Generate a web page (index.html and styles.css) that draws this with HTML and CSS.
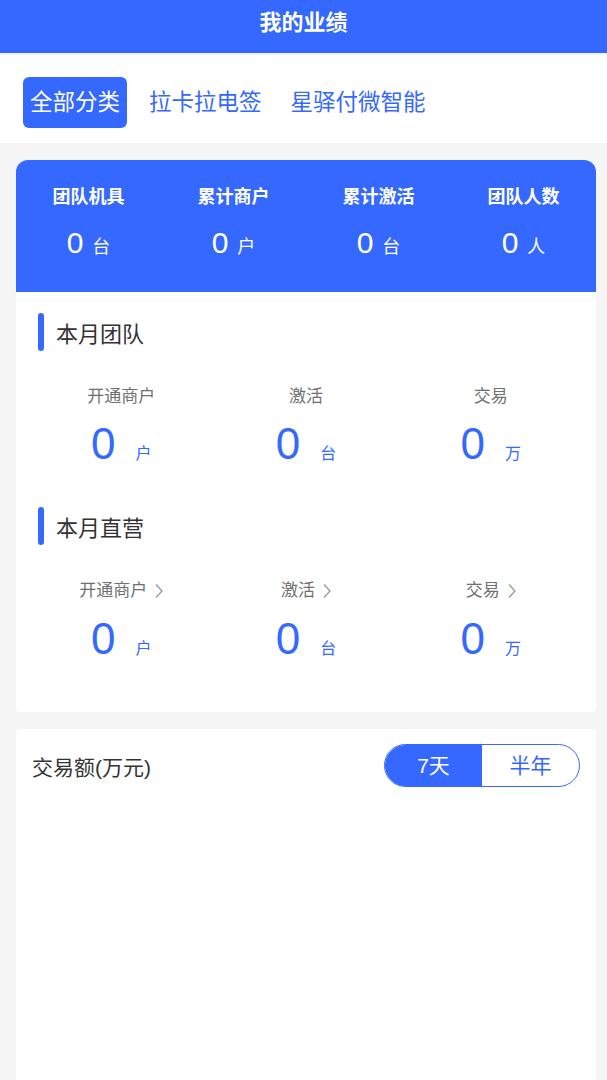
FILE: index.html
```
<!DOCTYPE html>
<html lang="zh-CN">
<head>
    <meta charset="UTF-8">
    <title>我的业绩</title>
    <link rel="stylesheet" href="styles.css">
</head>
<body>
<header class="topbar">我的业绩</header>

<nav class="tabs">
    <span class="tab active">全部分类</span>
    <span class="tab">拉卡拉电签</span>
    <span class="tab">星驿付微智能</span>
</nav>

<main class="page">
    <section class="card summary">
        <div class="summary-head">
            <div class="stat">
                <div class="stat-label">团队机具</div>
                <div class="stat-value">0<span class="unit">台</span></div>
            </div>
            <div class="stat">
                <div class="stat-label">累计商户</div>
                <div class="stat-value">0<span class="unit">户</span></div>
            </div>
            <div class="stat">
                <div class="stat-label">累计激活</div>
                <div class="stat-value">0<span class="unit">台</span></div>
            </div>
            <div class="stat">
                <div class="stat-label">团队人数</div>
                <div class="stat-value">0<span class="unit">人</span></div>
            </div>
        </div>

        <div class="block">
            <h2 class="block-title">本月团队</h2>
            <div class="metrics">
                <div class="metric">
                    <div class="metric-label">开通商户</div>
                    <div class="metric-value">0<span class="unit">户</span></div>
                </div>
                <div class="metric">
                    <div class="metric-label">激活</div>
                    <div class="metric-value">0<span class="unit">台</span></div>
                </div>
                <div class="metric">
                    <div class="metric-label">交易</div>
                    <div class="metric-value">0<span class="unit">万</span></div>
                </div>
            </div>
        </div>

        <div class="block second">
            <h2 class="block-title">本月直营</h2>
            <div class="metrics">
                <div class="metric">
                    <div class="metric-label">开通商户<svg class="chev" viewBox="0 0 8 16"><path d="M1 1.5 L7 8 L1 14.5"/></svg></div>
                    <div class="metric-value">0<span class="unit">户</span></div>
                </div>
                <div class="metric">
                    <div class="metric-label">激活<svg class="chev" viewBox="0 0 8 16"><path d="M1 1.5 L7 8 L1 14.5"/></svg></div>
                    <div class="metric-value">0<span class="unit">台</span></div>
                </div>
                <div class="metric">
                    <div class="metric-label">交易<svg class="chev" viewBox="0 0 8 16"><path d="M1 1.5 L7 8 L1 14.5"/></svg></div>
                    <div class="metric-value">0<span class="unit">万</span></div>
                </div>
            </div>
        </div>
    </section>

    <section class="card chart">
        <div class="chart-head">
            <h2 class="chart-title">交易额(万元)</h2>
            <div class="switch">
                <span class="switch-item on">7天</span>
                <span class="switch-item">半年</span>
            </div>
        </div>
        <div class="chart-body"></div>
    </section>
</main>
</body>
</html>
```

FILE: styles.css
```
html {
    background: #f5f5f5;
}
body {
    margin: 0;
    font-family: "Liberation Sans", "Noto Sans CJK SC", sans-serif;
    color: #333;
    background: #f5f5f5;
}
h2 {
    margin: 0;
    font-weight: normal;
}

.topbar {
    height: 53px;
    background: #3468ff;
    color: white;
    font-size: 22px;
    font-weight: bold;
    display: flex;
    align-items: center;
    justify-content: center;
    padding-bottom: 14px;
    box-sizing: border-box;
}

.tabs {
    margin-top: 2px;
    background: white;
    padding: 22px 23px 15px 23px;
    display: flex;
    gap: 15px;
}
.tab {
    padding: 0 7px;
    line-height: 51px;
    font-size: 22.5px;
    color: #3468ff;
    border-radius: 6px;
}
.tab.active {
    background: #3468ff;
    color: white;
}

.page {
    padding: 17px 11px 0 16px;
}
.card {
    background: white;
}
.summary {
    border-radius: 12px 12px 4px 4px;
    padding-bottom: 38px;
}

.summary-head {
    background: #3468ff;
    border-radius: 12px 12px 0 0;
    height: 132px;
    box-sizing: border-box;
    padding-top: 25px;
    display: grid;
    grid-template-columns: repeat(4, 1fr);
    color: white;
    text-align: center;
}
.stat-label {
    font-size: 18px;
    font-weight: bold;
    line-height: 24px;
}
.stat-value {
    margin-top: 14px;
    font-size: 30px;
    line-height: 40px;
}
.stat-value .unit {
    font-size: 18px;
    margin-left: 9px;
}

.block {
    padding: 21px 13px 0 13px;
}
.block.second {
    padding-top: 28px;
}
.block-title {
    display: flex;
    align-items: center;
    height: 38px;
    font-size: 22px;
    color: #333;
    margin-left: 9px;
}
.block-title::before {
    content: "";
    width: 6px;
    height: 38px;
    border-radius: 3px;
    background: #3468ff;
    margin-right: 12px;
}

.metrics {
    display: grid;
    grid-template-columns: repeat(3, 1fr);
    text-align: center;
    margin-top: 34px;
}
.metric-label {
    font-size: 17px;
    line-height: 24px;
    color: #707070;
    display: flex;
    align-items: center;
    justify-content: center;
}
.chev {
    width: 8px;
    height: 16px;
    margin-left: 8px;
    fill: none;
    stroke: #999;
    stroke-width: 1.3;
}
.metric-value {
    margin-top: 10px;
    font-size: 44px;
    line-height: 50px;
    color: #3468ff;
}
.second .metric-value {
    margin-top: 11px;
}
.metric-value .unit {
    font-size: 16px;
    margin-left: 20px;
}

.chart {
    margin-top: 17px;
    border-radius: 4px 4px 0 0;
    padding: 15px 16px;
}
.chart-head {
    display: flex;
    align-items: center;
    justify-content: space-between;
}
.chart-title {
    font-size: 21px;
    color: #333;
}
.switch {
    display: flex;
    border: 1px solid #3468ff;
    border-radius: 22px;
    overflow: hidden;
}
.switch-item {
    width: 97px;
    line-height: 41px;
    text-align: center;
    font-size: 21px;
    color: #3468ff;
}
.switch-item.on {
    background: #3468ff;
    color: white;
}
.chart-body {
    height: 360px;
}
```
